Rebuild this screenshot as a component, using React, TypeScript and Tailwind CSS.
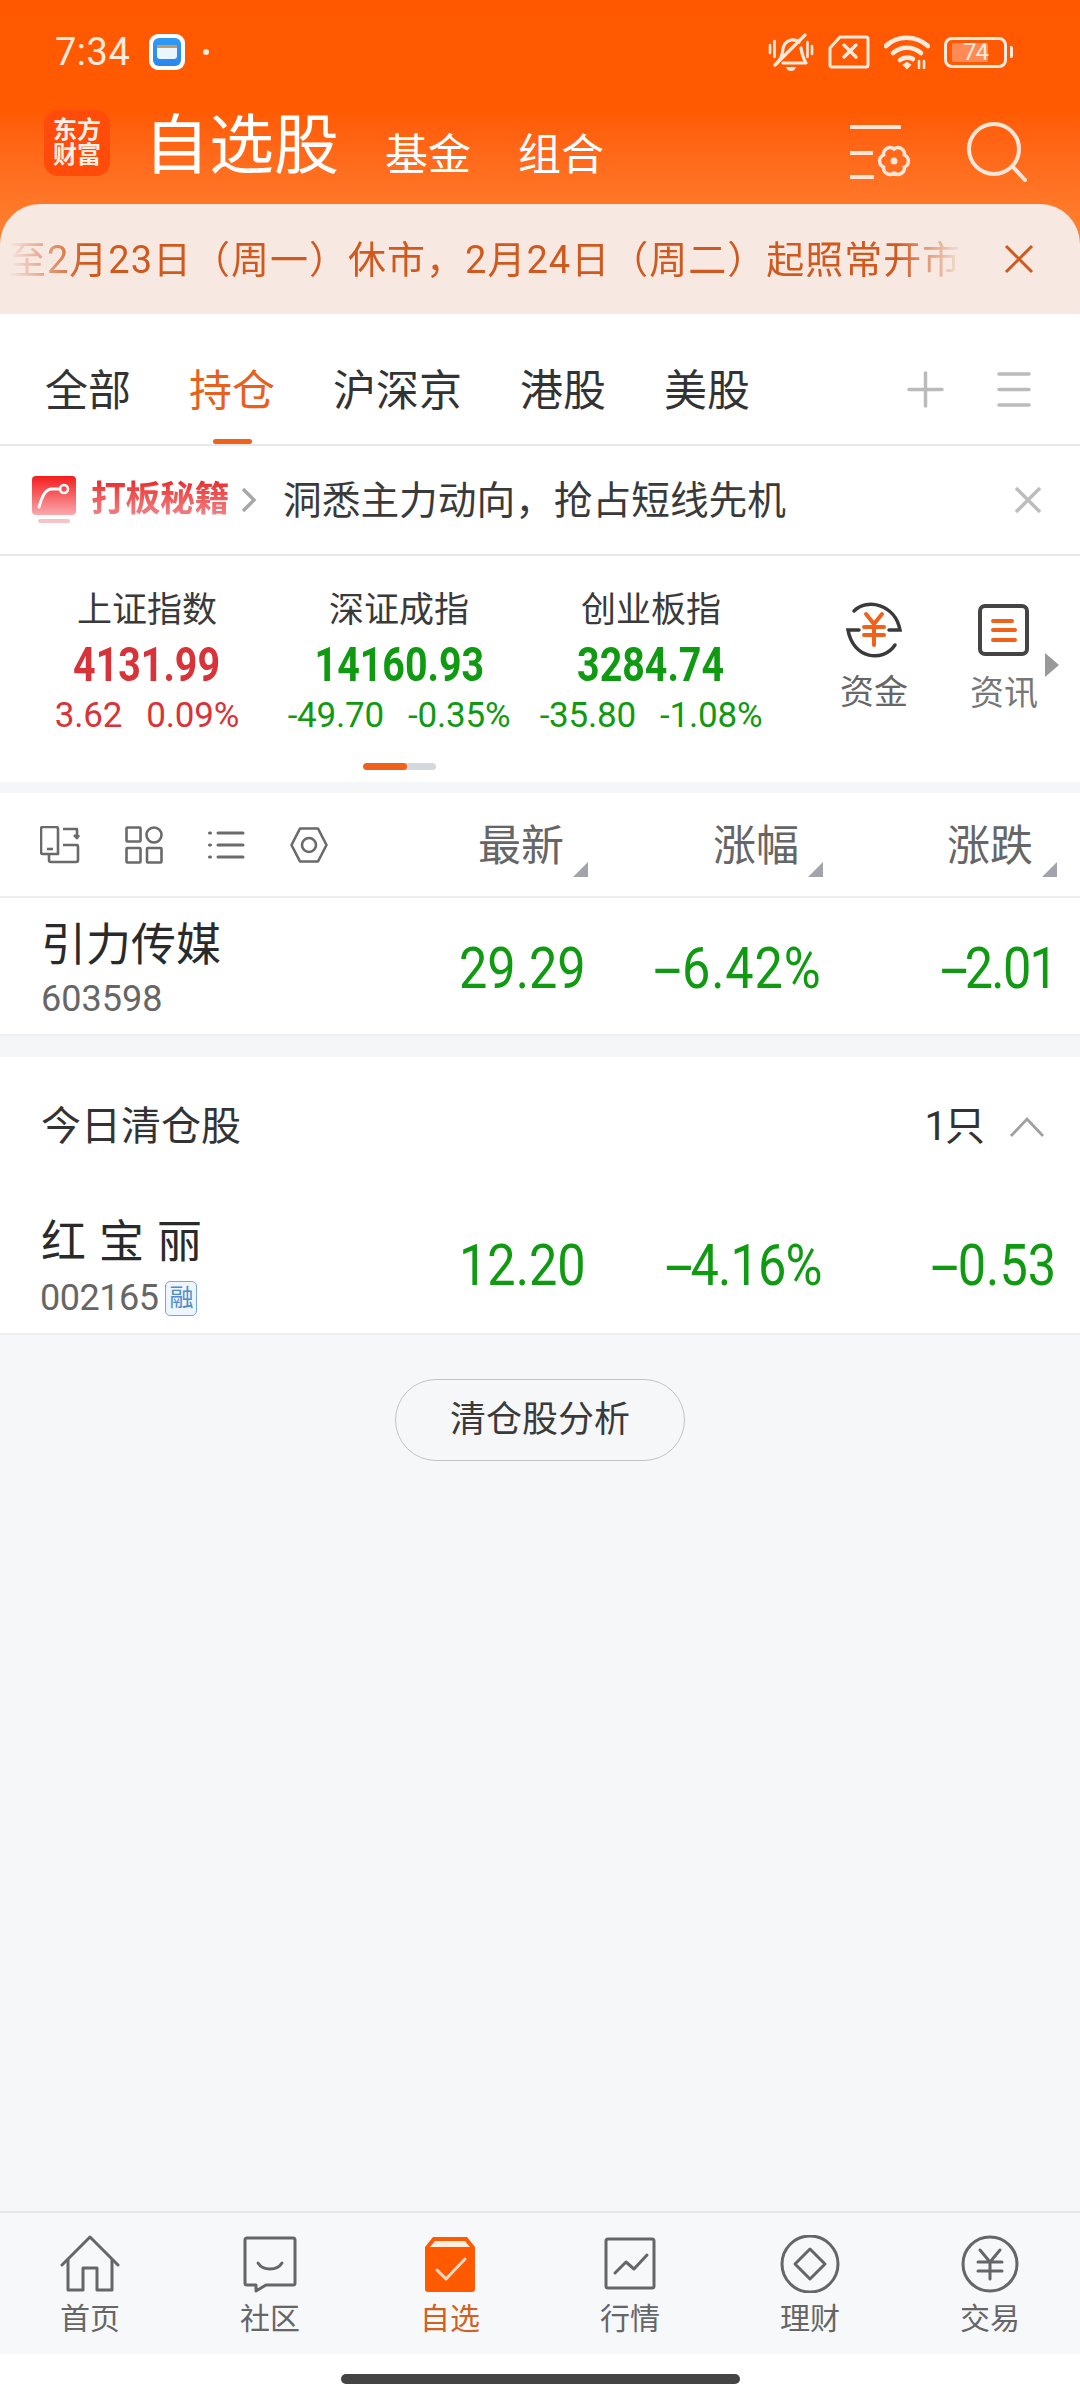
import React from "react";

const cream = "#ffeadd";

function StatusIcons() {
  return (
    <div className="flex items-center ml-auto mr-[67px] gap-[14px]">
      <svg width="46" height="42" viewBox="0 0 46 42" fill="none" stroke={cream} strokeWidth="3.2" strokeLinecap="round" strokeLinejoin="round">
        <path d="M2 14v8M6.500 10v16M39.500 11v15M44 15v8" strokeWidth="2.600" />
        <path d="M9 32c3-3 5-6 5.500-11 .5-7 3.500-11 8.500-12 3-.5 6 0 8 2" />
        <path d="M33 17c1 6 2 10 5 15H15" />
        <path d="M7 34 37 4" />
        <path d="M18 36h10c-1 3-3 4-5 4s-4-1-5-4z" fill={cream} stroke="none" />
      </svg>
      <svg width="42" height="34" viewBox="0 0 42 34" fill="none" stroke={cream} strokeWidth="3" strokeLinecap="round" strokeLinejoin="round">
        <path d="M12 2h26a2 2 0 0 1 2 2v26a2 2 0 0 1-2 2H4a2 2 0 0 1-2-2V13z" />
        <path d="M16 10l12 12M28 10 16 22" strokeWidth="3.400" />
      </svg>
      <svg width="46" height="36" viewBox="0 0 46 36" fill="none" stroke={cream} strokeWidth="4.600" strokeLinecap="round">
        <path d="M2 12C13 1 32 1 44 12" />
        <path d="M9 19c8-7 20-7 28 0" />
        <path d="M16 26c4-3 10-3 13-1" />
        <path d="M20 31l3 3 3-3-3-2z" fill={cream} strokeWidth="2" />
        <path d="M35 27v7M40 27v7" strokeWidth="2.600" />
      </svg>
      <div className="flex items-center">
        <div className="w-[63px] h-[31px] rounded-[8px] border-[3px] border-[#ffeadd] flex items-center pl-[5px]">
          <div className="w-[36px] h-[19px] bg-[#ff8a55] rounded-[2px] text-[24px] leading-[19px] text-[#ffeadd] text-right tracking-[-1px]">74</div>
        </div>
        <div className="w-[3px] h-[12px] ml-[3px] bg-[#ffeadd] rounded-r-[2px]" />
      </div>
    </div>
  );
}

function Header() {
  return (
    <div className="h-[314px] flex flex-col bg-linear-to-b from-[#ff5800] via-[#ff5a02] via-[35%] to-[#ff8030] to-[75%]">
      <div className="h-[104px] flex items-center pl-[55px]">
        <span className="text-[38px] text-[#ffeadd] tracking-[0.5px]">7:34</span>
        <div className="ml-[19px] w-[36px] h-[36px] rounded-[9px] bg-white flex items-center justify-center">
          <div className="w-[28px] h-[28px] rounded-[6px] bg-linear-to-b from-[#2f9bf5] to-[#2a86ee] flex flex-col items-center justify-center">
            <div className="w-[20px] h-[14px] bg-[#eaf5ff] rounded-b-[3px] border-t-[3px] border-[#c99a60]" />
          </div>
        </div>
        <div className="ml-[18px] w-[6px] h-[6px] rounded-full bg-[#ffeadd]" />
        <StatusIcons />
      </div>
      <div className="h-[100px] flex items-center pl-[44px] pr-[53px]">
        <div className="w-[66px] h-[66px] rounded-[14px] bg-[#ff4c0a] flex flex-col items-center justify-center font-bold text-[#fff0e6] text-[24px] leading-[25px] mt-[-22px]">
          <span>东方</span>
          <span>财富</span>
        </div>
        <span className="ml-[34px] text-[65px] leading-[76px] text-white mt-[-16px]">自选股</span>
        <span className="ml-[46px] text-[43px] leading-[50px] text-white mt-[2px]">基金</span>
        <span className="ml-[47px] text-[43px] leading-[50px] text-white mt-[2px]">组合</span>
        <svg className="ml-auto mt-[-4px]" width="62" height="56" viewBox="0 0 62 56" fill="none" stroke="#ffe6d8" strokeWidth="4">
          <path d="M0 3h51M0 29h23M0 53h24" />
          <path d="M54.400 31A6.500 6.500 0 0 1 54.400 43A6.500 6.500 0 0 1 44 49A6.500 6.500 0 0 1 33.600 43A6.500 6.500 0 0 1 33.600 31A6.500 6.500 0 0 1 44 25A6.500 6.500 0 0 1 54.400 31z" strokeWidth="3.500" />
          <circle cx="44" cy="37" r="3.500" fill="#ffe6d8" stroke="none" />
        </svg>
        <svg className="ml-[55px] mt-[-4px]" width="60" height="62" viewBox="0 0 60 62" fill="none" stroke="#ffe6d8" strokeWidth="4" strokeLinecap="round">
          <circle cx="27" cy="28" r="25" />
          <path d="M46 46 58 59" />
        </svg>
      </div>
      <div className="flex-1 rounded-t-[40px] bg-[#f7e8e2] flex items-center pl-[8px] pr-[46px]">
        <div className="w-[956px] overflow-hidden whitespace-nowrap text-[38px] leading-[44px] text-[#d05a1e] tracking-[1px] mt-[2px] [mask-image:linear-gradient(90deg,transparent,black_8%,black_93%,transparent)]">
          至2月23日（周一）休市，2月24日（周二）起照常开市
        </div>
        <svg className="ml-auto" width="30" height="30" viewBox="0 0 30 30" fill="none" stroke="#d05a1e" strokeWidth="3">
          <path d="M2 2l26 26M28 2 2 28" />
        </svg>
      </div>
    </div>
  );
}

function Tabs() {
  return (
    <div className="h-[132px] bg-white border-b-[2px] border-[#e9e9e9] flex pl-[45px] gap-[58px] text-[43px] leading-[52px] text-[#333]">
      <div className="pt-[51px]">全部</div>
      <div className="pt-[51px] flex flex-col items-center text-[#e8601c]">
        <span>持仓</span>
        <div className="mt-[22px] w-[39px] h-[7px] rounded-full bg-[#f0611a]" />
      </div>
      <div className="pt-[51px]">沪深京</div>
      <div className="pt-[51px]">港股</div>
      <div className="pt-[51px]">美股</div>
      <div className="ml-auto flex items-start pt-[57px] pr-[49px] gap-[53px]">
        <svg width="37" height="37" viewBox="0 0 37 37" stroke="#bbb" strokeWidth="3.500" strokeLinecap="round">
          <path d="M2 18.500h33M18.500 2v33" />
        </svg>
        <svg width="34" height="37" viewBox="0 0 34 37" stroke="#bbb" strokeWidth="3.500" strokeLinecap="round">
          <path d="M2 3h30M2 18.500h30M2 34h30" />
        </svg>
      </div>
    </div>
  );
}

function Promo() {
  return (
    <div className="h-[110px] bg-white border-b-[2px] border-[#e9e9e9] flex items-center pl-[32px] pr-[38px]">
      <svg width="46" height="48" viewBox="0 0 46 48">
        <defs>
          <linearGradient id="promo" x1="0" y1="0" x2="0" y2="1">
            <stop offset="0" stopColor="#f41c1c" />
            <stop offset="1" stopColor="#f9a9ae" />
          </linearGradient>
        </defs>
        <rect width="44" height="39" rx="4" fill="url(#promo)" />
        <rect x="6" y="43" width="32" height="4" rx="2" fill="#f8c4c8" />
        <path d="M7 31c3-10 6-18 13-18h8" fill="none" stroke="#fff" strokeWidth="3" strokeLinecap="round" />
        <circle cx="32" cy="13" r="4" fill="none" stroke="#fff" strokeWidth="2.500" />
      </svg>
      <span className="ml-[13px] text-[35px] leading-[44px] font-bold tracking-[-0.5px] bg-linear-to-b from-[#e81a20] to-[#f28a94] bg-clip-text text-transparent">打板秘籍</span>
      <svg className="ml-[12px]" width="16" height="26" viewBox="0 0 16 26" fill="none" stroke="#a8a8a8" strokeWidth="3.500">
        <path d="M2 2l11 11L2 24" />
      </svg>
      <span className="ml-[26px] mt-[2px] text-[38.700px] leading-[46px] text-[#3a3a3a]">洞悉主力动向，抢占短线先机</span>
      <svg className="ml-auto" width="28" height="28" viewBox="0 0 28 28" fill="none" stroke="#bdbdbd" strokeWidth="3.500">
        <path d="M2 2l24 24M26 2 2 26" />
      </svg>
    </div>
  );
}

function IndexCol({ name, value, a, b, color }: { name: string; value: string; a: string; b: string; color: string }) {
  return (
    <div className={`w-[252px] flex flex-col items-center pt-[33px] ${color}`}>
      <span className="text-[35px] leading-[44px] text-[#3a3a3a]">{name}</span>
      <span className="mt-[6px] inline-block text-[48px] leading-[52px] font-bold scale-x-[.82] origin-center">{value}</span>
      <div className="mt-[5px] flex justify-center gap-[24px] text-[35px] leading-[40px] whitespace-nowrap tracking-[-0.2px]">
        <span>{a}</span>
        <span>{b}</span>
      </div>
    </div>
  );
}

function Indices() {
  return (
    <div className="relative h-[226px] bg-white flex flex-col">
      <div className="flex pl-[21px] h-[180px]">
        <IndexCol name="上证指数" value="4131.99" a="3.62" b="0.09%" color="text-[#d9333a]" />
        <IndexCol name="深证成指" value="14160.93" a="-49.70" b="-0.35%" color="text-[#0f9a12]" />
        <IndexCol name="创业板指" value="3284.74" a="-35.80" b="-1.08%" color="text-[#0f9a12]" />
        <div className="w-[32px]" />
        <div className="w-[130px] flex flex-col items-center pt-[45px]">
          <svg width="58" height="58" viewBox="0 0 58 58" fill="none" stroke="#3a3a3a" strokeWidth="3.500" strokeLinecap="round">
            <path d="M9 10C22-3 50 3 55 29H44" />
            <path d="M50 44C38 62 8 58 3 29h11" />
            <path d="M21 13l8 10 8-10M19 26h20M19 34h20M29 23v21" stroke="#f0611a" strokeWidth="4" />
          </svg>
          <span className="mt-[13px] text-[34px] leading-[40px] text-[#666]">资金</span>
        </div>
        <div className="w-[130px] flex flex-col items-center pt-[48px]">
          <svg width="52" height="52" viewBox="0 0 52 52" fill="none" stroke="#444" strokeWidth="4">
            <rect x="2" y="2" width="47" height="48" rx="5" />
            <path d="M15 17h19M15 26h22M15 36h22" stroke="#f0611a" strokeLinecap="round" />
          </svg>
          <span className="mt-[17px] text-[34px] leading-[40px] text-[#777]">资讯</span>
        </div>
      </div>
      <div className="absolute right-[21px] top-[97px] w-0 h-0 border-y-[12px] border-y-transparent border-l-[14px] border-l-[#999]" />
      <div className="ml-[363px] mt-[27px] w-[73px] h-[7px] rounded-full bg-[#d5d8dc] overflow-hidden">
        <div className="w-[44px] h-full rounded-full bg-[#f0611a]" />
      </div>
    </div>
  );
}

function Tri() {
  return (
    <svg className="mb-[-6px]" width="15" height="15" viewBox="0 0 15 15">
      <path d="M15 0v15H0z" fill="#a3a3ab" />
    </svg>
  );
}

function ColumnHead() {
  return (
    <div className="h-[105px] bg-white border-b-[2px] border-[#eeeeee] flex items-center pl-[40px] pr-[23px]">
      <div className="flex items-center gap-[45px] flex-1">
        <svg width="40" height="38" viewBox="0 0 40 38" fill="none" stroke="#6a6a6a" strokeWidth="2.600" strokeLinejoin="round">
          <path d="M18 28H3a2 2 0 0 1-2-2V3a2 2 0 0 1 2-2h13a2 2 0 0 1 2 2v25z" />
          <path d="M7 23h6" />
          <path d="M23 3h10l4 0v8M34 9l3 3 2-3" />
          <path d="M23 19h14a2 2 0 0 1 1 2v13a2 2 0 0 1-2 2H11a2 2 0 0 1-2-2v-6" />
        </svg>
        <svg width="38" height="38" viewBox="0 0 38 38" fill="none" stroke="#6a6a6a" strokeWidth="2.600">
          <rect x="1.500" y="1.500" width="14" height="14" rx="1" />
          <circle cx="29" cy="9" r="7.500" />
          <rect x="1.500" y="22" width="14" height="14.500" rx="1" />
          <rect x="22" y="22" width="14.500" height="14.500" rx="1" />
        </svg>
        <svg width="37" height="30" viewBox="0 0 37 30" fill="none" stroke="#6a6a6a" strokeWidth="3" strokeLinecap="round">
          <path d="M10 3h25M10 15h25M10 27h25M1.500 3h1M1.500 15h1M1.500 27h1" />
        </svg>
        <svg width="38" height="36" viewBox="0 0 38 36" fill="none" stroke="#6a6a6a" strokeWidth="2.600" strokeLinejoin="round">
          <path d="M10 1.500h18L36.500 18 28 34.500H10L1.500 18z" />
          <circle cx="19" cy="18" r="7" />
        </svg>
      </div>
      <div className="w-[237px] flex justify-end items-end gap-[9px] text-[43px] leading-[50px] text-[#666] mr-[-1px] pt-[2px]">
        <span>最新</span>
        <Tri />
      </div>
      <div className="w-[236px] flex justify-end items-end gap-[9px] text-[43px] leading-[50px] text-[#666] pt-[2px]">
        <span>涨幅</span>
        <Tri />
      </div>
      <div className="w-[234px] flex justify-end items-end gap-[9px] text-[43px] leading-[50px] text-[#666] pt-[2px]">
        <span>涨跌</span>
        <Tri />
      </div>
    </div>
  );
}

function Val({ v, tight }: { v: string; tight?: string }) {
  const neg = v.startsWith("-");
  return (
    <div className="flex justify-end">
      <span className={`inline-block origin-right scale-x-[.87] ${tight ?? ""}`}>
        {neg ? <span className="inline-block scale-x-[2] mx-[7px]">-</span> : null}
        {neg ? v.slice(1) : v}
      </span>
    </div>
  );
}

function Values({ p, q, r, qt, rt }: { p: string; q: string; r: string; qt?: string; rt?: string }) {
  return (
    <div className="flex items-center text-[#0f9a12] text-[58px] leading-[64px] whitespace-nowrap">
      <div className="w-[237px]"><Val v={p} /></div>
      <div className="w-[236px]"><Val v={q} tight={qt} /></div>
      <div className="w-[234px]"><Val v={r} tight={rt} /></div>
    </div>
  );
}

function StockOne() {
  return (
    <div className="h-[138px] bg-white border-b-[2px] border-[#eeeeee] flex items-center pl-[41px] pr-[24px]">
      <div className="flex-1 flex flex-col pt-[8px]">
        <span className="text-[45px] leading-[54px] text-[#2a2a2a]">引力传媒</span>
        <span className="text-[36px] leading-[44px] text-[#666] mt-[4px]">603598</span>
      </div>
      <div className="pt-[4px]">
        <Values p="29.29" q="-6.42%" r="-2.01" qt="tracking-[1px]" rt="tracking-[-2px]" />
      </div>
    </div>
  );
}

function Cleared() {
  return (
    <div className="bg-white h-[278px] flex flex-col border-b-[2px] border-[#eeeeee]">
      <div className="h-[138px] flex items-center pl-[41px] pr-[35px] pt-[2px]">
        <span className="text-[40px] leading-[48px] text-[#333]">今日清仓股</span>
        <span className="ml-auto text-[40px] leading-[48px] text-[#333] tracking-[-2px]">1只</span>
        <svg className="ml-[26px]" width="36" height="22" viewBox="0 0 36 22" fill="none" stroke="#a0a0a0" strokeWidth="2.800">
          <path d="M2 20 18 3l16 17" />
        </svg>
      </div>
      <div className="flex-1 flex items-center pl-[41px] pr-[24px]">
        <div className="flex-1 flex flex-col pt-[8px]">
          <span className="text-[45px] leading-[54px] text-[#2a2a2a] tracking-[13px]">红宝丽</span>
          <div className="flex items-center mt-[6px] ml-[-1px]">
            <span className="text-[36px] leading-[44px] text-[#666] tracking-[-0.5px]">002165</span>
            <span className="ml-[7px] w-[32px] h-[35px] rounded-[5px] border-[1.500px] border-[#7aa7d4] bg-[#eef5fc] text-[#4f8cc9] text-[24px] leading-[32px] text-center">融</span>
          </div>
        </div>
        <div className="pt-[2px]">
          <Values p="12.20" q="-4.16%" r="-0.53" qt="tracking-[-1px]" />
        </div>
      </div>
    </div>
  );
}

function Nav() {
  const stroke = { fill: "none", stroke: "#666", strokeWidth: 3, strokeLinejoin: "round" as const, strokeLinecap: "round" as const };
  return (
    <div className="h-[143px] bg-[#f7f8fa] border-t-[2px] border-[#e6e6e8] flex text-[30px] leading-[40px] text-[#666]">
      <div className="flex-1 flex flex-col items-center pt-[22px]">
        <svg width="60" height="58" viewBox="0 0 60 58" {...stroke}>
          <path d="M2 30 30 2l28 28" />
          <path d="M8 25v30h15V33h14v22h15V25" />
        </svg>
        <span className="mt-[6px]">首页</span>
      </div>
      <div className="flex-1 flex flex-col items-center pt-[22px]">
        <svg width="54" height="58" viewBox="0 0 54 58" {...stroke}>
          <path d="M4 3h46a2 2 0 0 1 2 2v43a2 2 0 0 1-2 2H23l-10 6v-6H4a2 2 0 0 1-2-2V5a2 2 0 0 1 2-2z" />
          <path d="M15 28c5 8 19 8 24 0" />
        </svg>
        <span className="mt-[6px]">社区</span>
      </div>
      <div className="flex-1 flex flex-col items-center pt-[22px] text-[#d2601f]">
        <svg width="54" height="58" viewBox="0 0 54 58">
          <path d="M10 2h34l8 10v42a3 3 0 0 1-3 3H5a3 3 0 0 1-3-3V12z" fill="#ff5a00" />
          <path d="M12 6h30l5 6H7z" fill="#ffeede" />
          <path d="M14 35l9 9 19-20" fill="none" stroke="#ffd9c2" strokeWidth="3" strokeLinecap="round" strokeLinejoin="round" />
        </svg>
        <span className="mt-[6px]">自选</span>
      </div>
      <div className="flex-1 flex flex-col items-center pt-[22px]">
        <svg width="52" height="58" viewBox="0 0 52 58" {...stroke}>
          <rect x="2" y="4" width="48" height="49" rx="2" />
          <path d="M11 38l11-11 8 7 13-14" />
        </svg>
        <span className="mt-[6px]">行情</span>
      </div>
      <div className="flex-1 flex flex-col items-center pt-[22px]">
        <svg width="60" height="58" viewBox="0 0 60 58" {...stroke}>
          <circle cx="30" cy="29" r="28" />
          <path d="M30 14l15 15-15 15-15-15z" />
        </svg>
        <span className="mt-[6px]">理财</span>
      </div>
      <div className="flex-1 flex flex-col items-center pt-[22px]">
        <svg width="58" height="58" viewBox="0 0 58 58" {...stroke}>
          <circle cx="29" cy="29" r="27" />
          <path d="M19 15l10 12 10-12M17 27h24M17 36h24M29 27v17" />
        </svg>
        <span className="mt-[6px]">交易</span>
      </div>
    </div>
  );
}

export default function App() {
  return (
    <div className="w-[1080px] h-[2400px] overflow-hidden flex flex-col bg-white font-[family-name:Roboto,'Noto_Sans_CJK_SC',sans-serif]">
      <Header />
      <Tabs />
      <Promo />
      <Indices />
      <div className="h-[11px] bg-[#f5f6f8]" />
      <ColumnHead />
      <StockOne />
      <div className="h-[21px] bg-[#f5f6f8]" />
      <Cleared />
      <main className="flex-1 bg-[#f6f7f9] flex flex-col items-center pt-[44px]">
        <button className="w-[290px] h-[82px] rounded-full border-[1.500px] border-[#c4c4c4] text-[36px] text-[#3a3a3a]">清仓股分析</button>
      </main>
      <Nav />
      <div className="h-[46px] bg-white pt-[20px]">
        <div className="mx-auto w-[399px] h-[10px] rounded-full bg-[#444]" />
      </div>
    </div>
  );
}
